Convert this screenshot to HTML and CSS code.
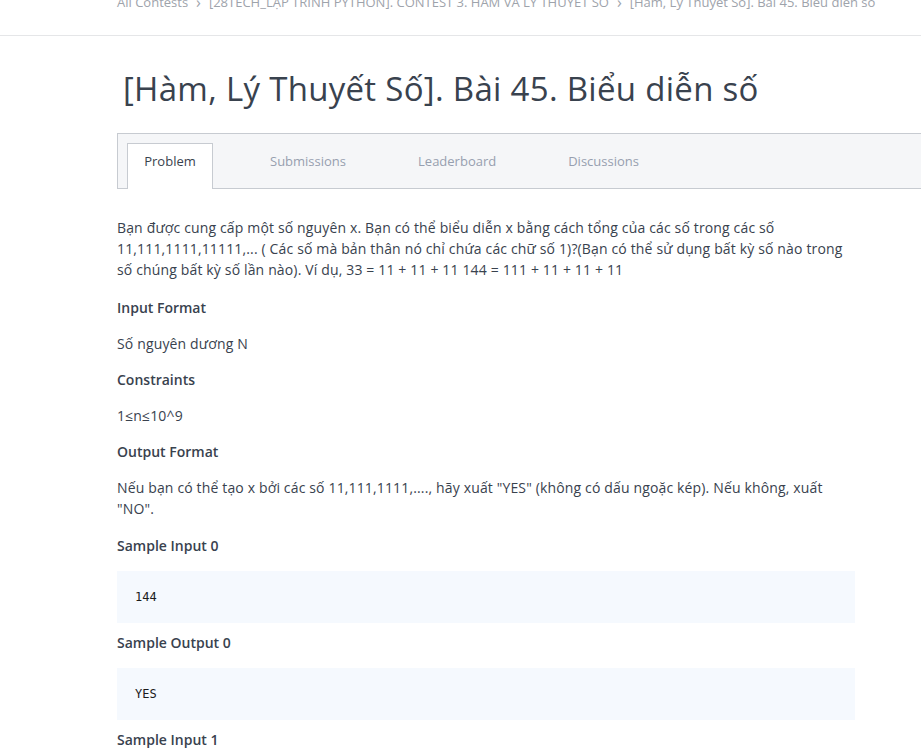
FILE: index.html
```html
<!DOCTYPE html>
<html lang="vi">
<head>
<meta charset="utf-8">
<title>Bài 45. Biểu diễn số</title>
<link rel="stylesheet" href="styles.css">
</head>
<body>
<header class="crumbs">
  <nav class="crumb-row">
    <a class="crumb">All Contests</a>
    <span class="sep">&#8250;</span>
    <a class="crumb">[28TECH_LẬP TRÌNH PYTHON]. CONTEST 3. HÀM VÀ LÝ THUYẾT SỐ</a>
    <span class="sep">&#8250;</span>
    <a class="crumb">[Hàm, Lý Thuyết Số]. Bài 45. Biểu diễn số</a>
  </nav>
</header>
<main class="page">
  <h1 class="title">[Hàm, Lý Thuyết Số]. Bài 45. Biểu diễn số</h1>
  <div class="tabs">
    <a class="tab active">Problem</a>
    <a class="tab">Submissions</a>
    <a class="tab">Leaderboard</a>
    <a class="tab">Discussions</a>
  </div>
  <section class="content">
    <p class="para lead">Bạn được cung cấp một số nguyên x. Bạn có thể biểu diễn x bằng cách tổng của các số trong các số 11,111,1111,11111,... ( Các số mà bản thân nó chỉ chứa các chữ số 1)?(Bạn có thể sử dụng bất kỳ số nào trong số chúng bất kỳ số lần nào). Ví dụ, 33 = 11 + 11 + 11 144 = 111 + 11 + 11 + 11</p>
    <h2 class="sub">Input Format</h2>
    <p class="para">Số nguyên dương N</p>
    <h2 class="sub">Constraints</h2>
    <p class="para">1≤n≤10^9</p>
    <h2 class="sub">Output Format</h2>
    <p class="para lead2">Nếu bạn có thể tạo x bởi các số 11,111,1111,...., hãy xuất "YES" (không có dấu ngoặc kép). Nếu không, xuất "NO".</p>
    <h2 class="sub">Sample Input 0</h2>
    <pre class="sample">144</pre>
    <h2 class="sub">Sample Output 0</h2>
    <pre class="sample">YES</pre>
    <h2 class="sub">Sample Input 1</h2>
    <pre class="sample">11</pre>
  </section>
</main>
</body>
</html>
```
FILE: styles.css
```css
* { box-sizing: border-box; }
html, body { margin: 0; padding: 0; background: #fff; }
body {
  font-family: "Open Sans", "Noto Sans", sans-serif;
  color: #39424e;
  overflow: hidden;
}
.crumbs {
  margin-top: -10px;
  height: 46px;
  border-bottom: 1px solid #e5e6e8;
  padding-left: 117px;
}
.crumb-row {
  display: flex;
  align-items: center;
  gap: 8px;
  height: 24px;
  font-size: 13px;
  color: #9ea3ab;
  white-space: nowrap;
}
.crumb { color: #9ea3ab; }
.sep { font-size: 16px; color: #9ea3ab; }
.page {
  padding-left: 117px;
}
.title {
  margin: 0;
  padding: 30px 0 0 6px;
  height: 97px;
  font-size: 33px;
  font-weight: 400;
  letter-spacing: 0.3px;
  line-height: 46px;
  color: #39424e;
}
.tabs {
  display: flex;
  height: 56px;
  background: #f5f6f8;
  border: 1px solid #c7cbd1;
  border-right: 0;
  padding: 9px 0 0 9px;
}
.tab {
  height: 46px;
  margin-bottom: -1px;
  padding: 8px 35px 0;
  font-size: 13px;
  line-height: 18px;
  color: #979faf;
  border: 1px solid transparent;
  border-bottom: 0;
}
.tab.active {
  width: 86px;
  padding: 8px 0 0;
  text-align: center;
  background: #fff;
  color: #39424e;
  border-color: #c7cbd1;
  margin-right: 21px;
}
.content {
  width: 738px;
  padding-top: 28px;
  font-variant-numeric: tabular-nums;
}
.para {
  margin: 0 0 15px;
  font-size: 14px;
  line-height: 21px;
  letter-spacing: 0.15px;
}
.para.lead { margin-bottom: 17px; }
.para.lead2 { margin-bottom: 16px; }
.sub {
  margin: 0 0 15px;
  font-size: 14px;
  font-weight: 600;
  line-height: 21px;
}
.sample {
  margin: 0 0 9px;
  height: 52px;
  padding: 16px 18px;
  background: #f5f9fe;
  font-family: "DejaVu Sans Mono", "Liberation Mono", monospace;
  font-size: 12px;
  line-height: 20px;
  color: #1b1b1b;
}
```
